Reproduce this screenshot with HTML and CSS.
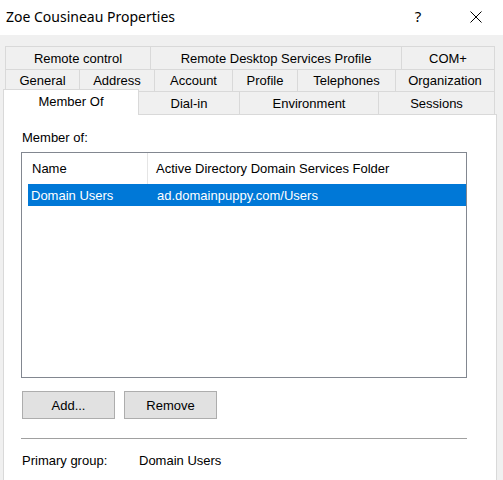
FILE: index.html
```html
<!DOCTYPE html>
<html>
<head>
<meta charset="utf-8">
<title>Zoe Cousineau Properties</title>
<link rel="stylesheet" href="styles.css">
</head>
<body>
<div class="window">
  <div class="titlebar">
    <span class="title">Zoe Cousineau Properties</span>
    <span class="cap-btn help">?</span>
    <span class="cap-btn close">
      <svg width="12" height="12" viewBox="0 0 12 12"><path d="M0.5 0.5 L11.5 11.5 M11.5 0.5 L0.5 11.5" stroke="#000" stroke-width="1" fill="none"/></svg>
    </span>
  </div>

  <div class="tabs">
    <div class="tabrow r1">
      <div class="tab t-remote">Remote control</div>
      <div class="tab t-rds">Remote Desktop Services Profile</div>
      <div class="tab t-com">COM+</div>
    </div>
    <div class="tabrow r2">
      <div class="tab t-general">General</div>
      <div class="tab t-address">Address</div>
      <div class="tab t-account">Account</div>
      <div class="tab t-profile">Profile</div>
      <div class="tab t-tel">Telephones</div>
      <div class="tab t-org">Organization</div>
    </div>
    <div class="tabrow r3">
      <div class="tab t-member selected">Member Of</div>
      <div class="tab t-dial">Dial-in</div>
      <div class="tab t-env">Environment</div>
      <div class="tab t-sessions">Sessions</div>
    </div>
  </div>

  <div class="panel">
    <div class="label">Member of:</div>
    <div class="listview">
      <div class="lv-header">
        <div class="hcol hcol-name">Name</div>
        <div class="hcol hcol-folder">Active Directory Domain Services Folder</div>
      </div>
      <div class="lv-row selected-row">
        <div class="cell cell-name">Domain Users</div>
        <div class="cell cell-folder">ad.domainpuppy.com/Users</div>
      </div>
    </div>
    <div class="buttons">
      <button class="btn">Add...</button>
      <button class="btn">Remove</button>
    </div>
    <div class="separator"></div>
    <div class="primary">
      <span class="primary-label">Primary group:</span>
      <span class="primary-value">Domain Users</span>
    </div>
  </div>
</div>
</body>
</html>
```

FILE: styles.css
```css
html, body {
  margin: 0;
  padding: 0;
}
body {
  width: 503px;
  height: 480px;
  overflow: hidden;
  background: #f0f0f0;
  font-family: "Liberation Sans", Arial, sans-serif;
  font-size: 13px;
  line-height: 15px;
  color: #000;
}
.window {
  display: flex;
  flex-direction: column;
  height: 480px;
}

/* Title bar */
.titlebar {
  height: 35px;
  flex: none;
  background: #fff;
  display: flex;
  align-items: center;
}
.title {
  flex: 1;
  margin-left: 6px;
  font-family: "Noto Sans", sans-serif;
  font-size: 14px;
  line-height: 18px;
  margin-top: -2px;
}
.cap-btn {
  width: 46px;
  height: 30px;
  display: flex;
  align-items: center;
  justify-content: center;
  margin-top: -2px;
}
.help {
  margin-right: 12px;
  font-family: "Noto Sans", sans-serif;
  font-size: 15px;
}
.close {
  margin-right: 4px;
}

/* Tabs */
.tabs {
  padding: 11px 0 0 5px;
  flex: none;
}
.tabrow {
  display: flex;
}
.tab {
  box-sizing: border-box;
  border: 1px solid #d9d9d9;
  border-bottom: none;
  margin-right: -1px;
  display: flex;
  align-items: center;
  justify-content: center;
  background: #f0f0f0;
  white-space: nowrap;
}
.r1 .tab { height: 23px; }
.r2 .tab { height: 22px; }
.r3 .tab { height: 23px; }

.t-remote { width: 146px; }
.t-rds { width: 252px; }
.t-com { width: 94px; }

.t-general { width: 75px; }
.t-address { width: 76px; }
.t-account { width: 79px; }
.t-profile { width: 66px; }
.t-tel { width: 99px; }
.t-org { width: 100px; }

.t-member { width: 136px; }
.t-dial { width: 102px; }
.t-env { width: 140px; }
.t-sessions { width: 117px; }

.tab.selected {
  background: #fff;
  height: 26px;
  margin-top: -2px;
  margin-bottom: -1px;
  margin-left: -2px;
  padding-bottom: 3px;
  position: relative;
  z-index: 2;
}

/* Panel */
.panel {
  flex: 1;
  box-sizing: border-box;
  margin-left: 3px;
  width: 494px;
  background: #fff;
  border: 1px solid #d9d9d9;
  border-bottom: none;
  padding: 15px 0 0 17px;
  position: relative;
  z-index: 1;
}
.label {
  padding-left: 1px;
  height: 15px;
}

.listview {
  margin-top: 7px;
  box-sizing: border-box;
  width: 446px;
  height: 226px;
  border: 1px solid #828790;
  background: #fff;
}
.lv-header {
  display: flex;
  height: 31px;
  align-items: stretch;
}
.hcol {
  display: flex;
  align-items: center;
  box-sizing: border-box;
}
.hcol-name {
  width: 126px;
  padding-left: 10px;
  border-right: 1px solid #e5e5e5;
}
.hcol-folder {
  padding-left: 8px;
}
.lv-row {
  display: flex;
  height: 22px;
  align-items: center;
  margin-left: 6px;
}
.selected-row {
  background: #0078d7;
  color: #fff;
}
.cell-name {
  width: 126px;
  padding-left: 3px;
  box-sizing: border-box;
}
.cell-folder {
  padding-left: 3px;
}

/* Buttons */
.buttons {
  display: flex;
  gap: 9px;
  margin-top: 13px;
  margin-left: 1px;
}
.btn {
  box-sizing: border-box;
  width: 93px;
  height: 28px;
  background: #e1e1e1;
  border: 1px solid #adadad;
  font-family: "Liberation Sans", Arial, sans-serif;
  font-size: 13px;
  color: #000;
  padding: 0;
  margin: 0;
}

.separator {
  margin-top: 19px;
  width: 446px;
  height: 0;
  border-top: 1px solid #a0a0a0;
}

.primary {
  margin-top: 14px;
  padding-left: 1px;
  display: flex;
}
.primary-label {
  width: 117px;
}
```
